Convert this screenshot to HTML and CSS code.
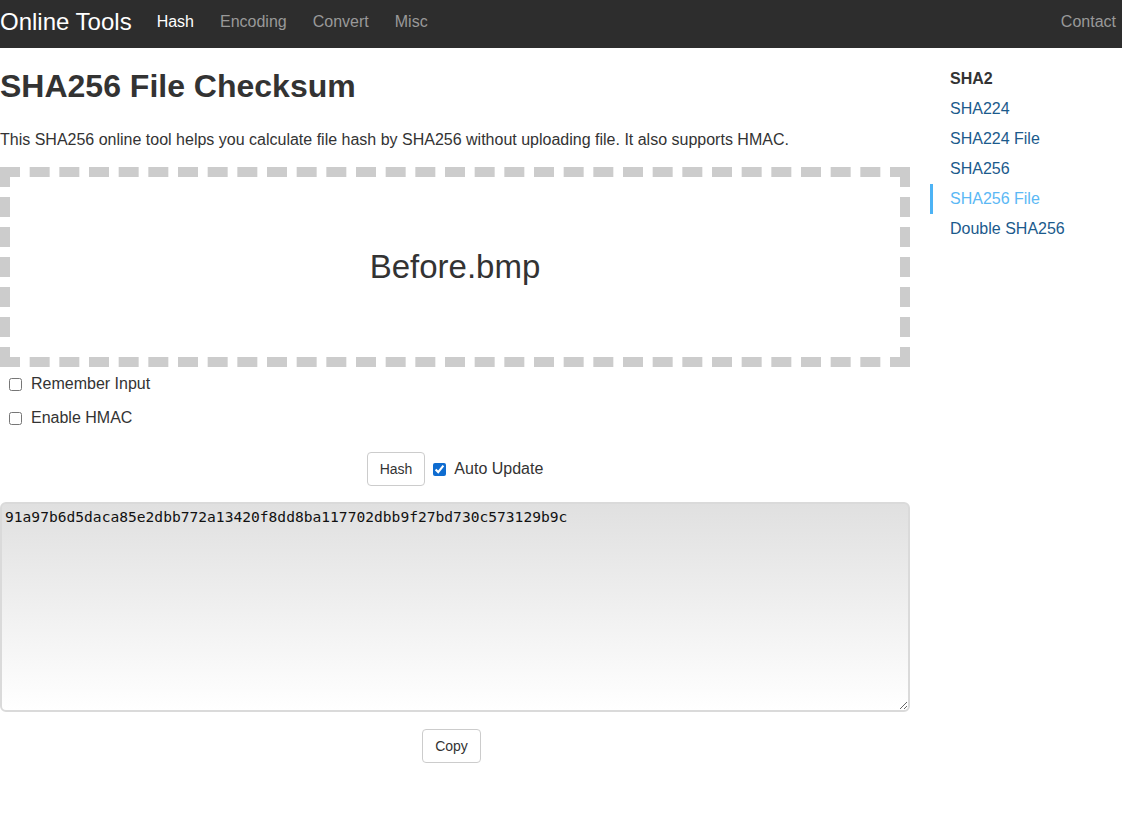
FILE: index.html
```html
<!DOCTYPE html>
<html>
<head>
<meta charset="utf-8">
<title>SHA256 File Checksum</title>
<link rel="stylesheet" href="styles.css">
</head>
<body>
<nav class="navbar">
  <div class="nav-left">
    <a class="brand" href="#">Online Tools</a>
    <a class="nav-link active" href="#">Hash</a>
    <a class="nav-link" href="#">Encoding</a>
    <a class="nav-link" href="#">Convert</a>
    <a class="nav-link" href="#">Misc</a>
  </div>
  <a class="nav-link contact" href="#">Contact</a>
</nav>
<div class="page">
  <main class="main">
    <h1 class="title">SHA256 File Checksum</h1>
    <p class="desc">This SHA256 online tool helps you calculate file hash by SHA256 without uploading file. It also supports HMAC.</p>
    <div class="dropzone">Before.bmp</div>
    <label class="check-row"><input type="checkbox" class="cb"> Remember Input</label>
    <label class="check-row"><input type="checkbox" class="cb"> Enable HMAC</label>
    <div class="actions">
      <button class="btn">Hash</button>
      <label class="auto"><input type="checkbox" class="cb" checked> Auto Update</label>
    </div>
    <textarea class="output" readonly>91a97b6d5daca85e2dbb772a13420f8dd8ba117702dbb9f27bd730c573129b9c</textarea>
    <div class="copy-row"><button class="btn">Copy</button></div>
  </main>
  <aside class="sidebar">
    <div class="side-head">SHA2</div>
    <a class="side-link" href="#">SHA224</a>
    <a class="side-link" href="#">SHA224 File</a>
    <a class="side-link" href="#">SHA256</a>
    <a class="side-link current" href="#">SHA256 File</a>
    <a class="side-link" href="#">Double SHA256</a>
  </aside>
</div>
</body>
</html>
```
FILE: styles.css
```css
* { box-sizing: border-box; }
body {
  margin: 0;
  font-family: "Liberation Sans", Arial, sans-serif;
  font-size: 16px;
  color: #333;
  background: #fff;
}
a { text-decoration: none; }
.navbar {
  height: 48px;
  background: #2d2d2d;
  display: flex;
  align-items: center;
  justify-content: space-between;
  padding-right: 6px;
}
.nav-left { display: flex; align-items: center; }
.brand {
  color: #fff;
  font-size: 24px;
  margin-right: 25px;
  position: relative;
  top: -2px;
}
.nav-link {
  color: #999;
  font-size: 16px;
  margin-right: 26px;
  position: relative;
  top: -2px;
}
.nav-link.active { color: #fff; }
.nav-link.contact { margin-right: 0; }
.page { display: flex; }
.main { width: 910px; flex: none; }
.title {
  font-size: 32px;
  font-weight: bold;
  margin: 21px 0 0;
  line-height: 35px;
}
.desc {
  margin: 25px 0 0;
  line-height: 22px;
}
.dropzone {
  margin-top: 16px;
  height: 200px;
  border: 10px dashed #ccc;
  display: flex;
  align-items: center;
  justify-content: center;
  font-size: 33px;
}
.check-row {
  display: flex;
  align-items: center;
  height: 34px;
  padding-left: 8px;
}
.cb {
  width: 13px;
  height: 13px;
  margin: 0 9px 0 1px;
  accent-color: #0f6cd0;
}
.actions {
  display: flex;
  justify-content: center;
  align-items: center;
  margin-top: 17px;
}
.btn {
  font-family: "Liberation Sans", Arial, sans-serif;
  font-size: 14px;
  color: #333;
  background: #fff;
  border: 1px solid #ccc;
  border-radius: 4px;
  height: 34px;
  padding: 0 12px;
}
.auto { display: flex; align-items: center; margin-left: 7px; }
.auto .cb { margin: 0 8px 0 1px; }
.output {
  display: block;
  width: 910px;
  height: 210px;
  margin-top: 16px;
  border: 2px solid #dadada;
  border-radius: 6px;
  background: linear-gradient(#e0e0e0, #fff);
  font-family: "DejaVu Sans Mono", monospace;
  font-size: 14.6px;
  line-height: 18px;
  padding: 4px 3px;
  color: #111;
  resize: vertical;
}
.copy-row {
  display: flex;
  justify-content: center;
  margin-top: 17px;
  padding-right: 7px;
}
.sidebar {
  margin-left: 20px;
  padding-top: 16px;
  display: flex;
  flex-direction: column;
}
.side-head {
  font-weight: bold;
  font-size: 16px;
  padding-left: 20px;
  line-height: 30px;
  height: 30px;
  color: #333;
}
.side-link {
  color: #1b5a8c;
  line-height: 30px;
  height: 30px;
  border-left: 3px solid transparent;
  padding-left: 17px;
}
.side-link.current {
  color: #5bb8f5;
  border-left-color: #4db3f5;
}
```
